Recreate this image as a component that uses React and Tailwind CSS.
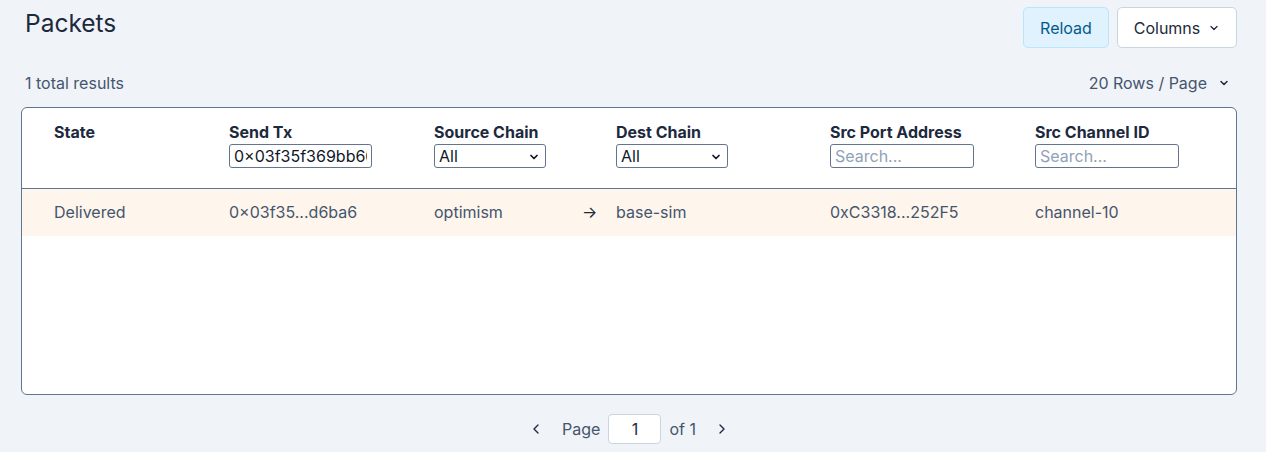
import { ChevronDown, ChevronLeft, ChevronRight } from 'lucide-react'

const COLS = [
  { key: 'state', label: 'State', w: 'w-[175px]' },
  { key: 'tx', label: 'Send Tx', w: 'w-[205px]' },
  { key: 'src', label: 'Source Chain', w: 'w-[182px]' },
  { key: 'dest', label: 'Dest Chain', w: 'w-[214px]' },
  { key: 'port', label: 'Src Port Address', w: 'w-[205px]' },
  { key: 'chan', label: 'Src Channel ID', w: 'w-[190px]' },
]

function Filter({ col }) {
  if (col.key === 'state') return null
  if (col.key === 'tx') {
    return (
      <input
        defaultValue="0×03f35f369bb66d6ba6"
        className="mt-[2px] block w-[143px] h-[24px] border border-slate-500 rounded-[3px] px-[4px] text-[16px] text-slate-900 bg-white outline-none"
      />
    )
  }
  if (col.key === 'src' || col.key === 'dest') {
    return (
      <div className="mt-[2px] relative w-[112px] h-[24px] border border-slate-500 rounded-[3px] bg-white flex items-center px-[4px]">
        <span className="text-[16px] text-slate-900 font-normal">All</span>
        <ChevronDown className="absolute right-[5px] top-[6px] w-[12px] h-[12px] text-slate-900" strokeWidth={3.5} />
      </div>
    )
  }
  return (
    <input
      placeholder="Search..."
      className="mt-[2px] block w-[144px] h-[24px] border border-slate-500 rounded-[3px] px-[4px] text-[16px] text-slate-900 placeholder:text-slate-400 bg-white outline-none"
    />
  )
}

export default function App() {
  return (
    <div className="min-h-[452px] bg-[#f0f4f9] pl-[21px] pr-[29px] text-slate-800" style={{ fontFamily: 'Inter, "Noto Sans", sans-serif' }}>
      <div className="flex items-start justify-between pt-[7px]">
        <h1 className="pl-[4px] pt-[1px] text-[24.5px] leading-[30px] text-slate-800">Packets</h1>
        <div className="flex gap-[8px]">
          <button className="h-[41px] w-[86px] pt-[1px] rounded-[5px] border border-sky-200 bg-sky-100 text-[16px] text-sky-800">Reload</button>
          <button className="h-[41px] w-[120px] pt-[1px] rounded-[5px] border border-slate-300 bg-white text-[16px] text-slate-800 flex items-center justify-center gap-[8px]">
            Columns <ChevronDown className="w-[12px] h-[12px]" strokeWidth={2.5} />
          </button>
        </div>
      </div>

      <div className="flex items-center justify-between mt-[25px] h-[20px]">
        <span className="pl-[4px] text-[16px] text-slate-600">1 total results</span>
        <span className="flex items-center gap-[11px] pr-[7px] text-[16px] text-slate-600">
          20 Rows / Page <ChevronDown className="w-[12px] h-[12px] text-slate-800" strokeWidth={3} />
        </span>
      </div>

      <div className="mt-[14px] h-[288px] border border-slate-500 rounded-[6px] bg-white overflow-hidden">
        <div className="flex pl-[32px] pt-[14px] h-[81px] border-b border-slate-500">
          {COLS.map(c => (
            <div key={c.key} className={c.w}>
              <div className="text-[16px] font-bold leading-[20px] text-slate-800">{c.label}</div>
              <Filter col={c} />
            </div>
          ))}
        </div>
        <div className="flex items-center pl-[32px] pb-[2px] h-[47px] bg-[#fef5ec] text-[16px] text-slate-600">
          <div className="w-[175px]">Delivered</div>
          <div className="w-[205px]">0×03f35...d6ba6</div>
          <div className="w-[182px] flex">
            <span className="w-[148px]">optimism</span>
            <span className="text-slate-800">→</span>
          </div>
          <div className="w-[214px]">base-sim</div>
          <div className="w-[205px]">0xC3318...252F5</div>
          <div className="w-[190px]">channel-10</div>
        </div>
      </div>

      <div className="flex items-center justify-center gap-[8px] mt-[19px] text-[16px] text-slate-600">
        <ChevronLeft className="w-[16px] h-[16px] text-slate-800 mr-[10px]" strokeWidth={2} />
        <span>Page</span>
        <input defaultValue="1" className="w-[53px] h-[30px] border border-slate-300 rounded-[4px] text-center text-slate-800 bg-white outline-none" />
        <span>of 1</span>
        <ChevronRight className="w-[16px] h-[16px] text-slate-800 ml-[10px]" strokeWidth={2} />
      </div>
    </div>
  )
}
